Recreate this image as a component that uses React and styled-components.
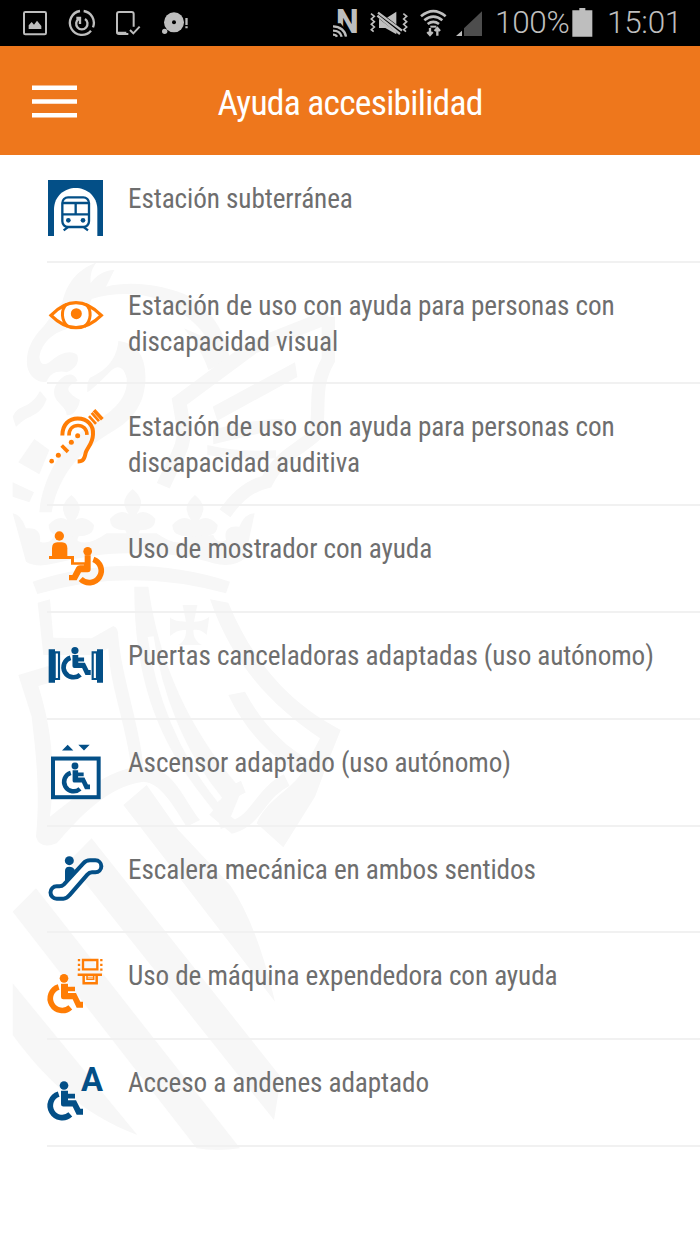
import React from "react";
import styled, { createGlobalStyle } from "styled-components";

const ORANGE = "#ff7d05";
const BLUE = "#034f87";

const GlobalStyle = createGlobalStyle`
  body {
    margin: 0;
    background: #ffffff;
    font-family: "Roboto Condensed", Roboto, sans-serif;
  }
`;

const Screen = styled.div`
  position: relative;
  isolation: isolate;
  width: 700px;
  height: 1244px;
  overflow: hidden;
`;

const StatusBar = styled.div`
  display: flex;
  align-items: center;
  box-sizing: border-box;
  height: 46px;
  padding: 0 0 0 23px;
  background: #000000;
  color: #bebebe;
`;

const StatusGroup = styled.div`
  display: flex;
  align-items: center;
  gap: ${props => props.gap}px;
  margin-left: ${props => props.start || 0}px;
`;

const StatusIcon = styled.svg`
  display: block;
  width: ${props => props.w}px;
  height: 46px;
`;

const StatusText = styled.span`
  font-family: Roboto, sans-serif;
  font-weight: 350;
  font-size: 31.5px;
  line-height: 48px;
  width: ${props => props.w}px;
  margin-left: ${props => props.start}px;
  letter-spacing: -0.3px;
  white-space: nowrap;
`;

const Header = styled.header`
  display: grid;
  grid-template-columns: 77px 1fr 77px;
  align-items: center;
  height: 109px;
  background: #ee771c;
`;

const MenuButton = styled.button`
  border: 0;
  padding: 1px 0 0 32px;
  background: none;
  height: 34px;
`;

const MenuIcon = styled.svg`
  display: block;
  width: 45px;
  height: 33px;
`;

const Title = styled.h1`
  margin: 0;
  padding-top: 5px;
  color: #ffffff;
  font-size: 35.5px;
  font-weight: 450;
  line-height: 42px;
  letter-spacing: -0.75px;
  text-align: center;
  font-stretch: 75%;
`;

const List = styled.ul`
  list-style: none;
  margin: 0;
  padding: 1px 0 0 47px;
`;

const Row = styled.li`
  display: flex;
  gap: 24px;
  box-sizing: border-box;
  height: ${props => (props.lines > 1 ? 121.5 : 106.9)}px;
  padding-top: 23px;
  border-bottom: 2px solid #f1f1f1;
`;

const RowIcon = styled.svg`
  flex: none;
  width: 57px;
  height: 57px;
  overflow: visible;
  color: ${props => props.tone};
`;

const RowText = styled.div`
  padding-top: 2px;
  color: #6e6e6e;
  font-size: 27.2px;
  line-height: 36px;
  letter-spacing: -0.09px;
  white-space: nowrap;
  font-stretch: 75%;
`;

const Line = styled.span`
  display: block;
`;

const Watermark = styled.svg`
  position: absolute;
  z-index: -1;
  left: 0;
  top: 255px;
  width: 370px;
  height: 900px;
`;

const Wheelchair = ({ x, y, scale = 1 }) => (
  <g transform={`translate(${x} ${y}) scale(${scale})`}>
    <circle cx="48" cy="13" r="13" fill="currentColor" />
    <path
      fill="currentColor"
      d="M39 29H60V38H81V52H60V57H84L97 83H105V101H86L74 76H46Q39 76 39 69Z"
    />
    <path fill="none" stroke="currentColor" strokeWidth="17" d="M32 39A36 36 0 1 0 67 100" />
  </g>
);

const icons = {
  station: {
    top: 42,
    art: (
      <>
        <path fill="currentColor" d="M144 45H309V213H144Z" />
        <path fill="#fff" d="M162 213V134C162 92 195 69 227 69S292 92 292 134V213Z" />
        <g fill="none" stroke="currentColor" strokeWidth="7">
          <rect x="187" y="97" width="80" height="89" rx="17" />
          <path d="M187 114H267M187 148H267M227 114V148" />
          <path d="M203 187L191 196M252 187L264 196" />
        </g>
        <circle cx="205" cy="166" r="7" fill="currentColor" />
        <circle cx="249" cy="166" r="7" fill="currentColor" />
      </>
    )
  },
  eye: {
    top: 363,
    art: (
      <>
        <path
          fill="#fff"
          stroke="currentColor"
          strokeWidth="10"
          d="M153 451Q190 413 228 413Q266 413 304 451Q266 488 228 488Q190 488 153 451Z"
        />
        <path
          fill="none"
          stroke="currentColor"
          strokeWidth="9"
          d="M200 417C182 435 183 466 204 485M257 417C276 435 275 466 253 485"
        />
        <circle cx="229" cy="446" r="16.5" fill="currentColor" />
      </>
    )
  },
  ear: {
    top: 52.5,
    art: (
      <>
        <g fill="none" stroke="currentColor">
          <path
            strokeWidth="12"
            d="M187 138C187 104 208 87 233 87C263 87 281 108 279 135C278 164 261 174 257 190C253 209 250 216 233 216"
          />
          <path strokeWidth="11" d="M207 138C207 118 219 108 234 108C249 108 260 118 261 136" />
          <path strokeWidth="11" d="M185 168L204 187" />
          <path strokeWidth="8" d="M267 80L288 103M275 70L297 95" />
          <path strokeWidth="11" d="M282 62L307 89" />
        </g>
        <g fill="currentColor">
          <circle cx="155" cy="215" r="7" />
          <circle cx="175" cy="197" r="7.5" />
          <circle cx="214" cy="158" r="7.5" />
          <circle cx="233" cy="139" r="7.5" />
        </g>
      </>
    )
  },
  counter: {
    top: 417,
    art: (
      <>
        <g fill="currentColor">
          <circle cx="178" cy="438" r="14" />
          <path d="M156 500V475Q156 457 172 457H186Q202 457 202 475V500Z" />
          <path d="M147 498H222V517H254V496H272V538Q272 547 263 547H243L230 571H207V555H217L229 532Q232 526 240 526H252V524H213V507H147Z" />
          <circle cx="263" cy="484" r="13" />
        </g>
        <path fill="none" stroke="currentColor" strokeWidth="17" d="M280 508A36 36 0 1 1 242 567" />
      </>
    )
  },
  gate: {
    top: 78,
    art: (
      <>
        <path fill="currentColor" d="M146 118H165V218H146ZM291 118H309V218H291Z" />
        <path
          fill="#fff"
          stroke="currentColor"
          strokeWidth="6.5"
          d="M164 127H177V207H164ZM278 127H291V207H278Z"
        />
        <Wheelchair x={185} y={111} scale={0.83} />
      </>
    )
  },
  lift: {
    top: 398.4,
    art: (
      <>
        <path fill="currentColor" d="M186 421L203 404L220 421ZM235 404H269L252 421Z" />
        <rect
          x="159"
          y="445"
          width="137"
          height="116"
          fill="#fff"
          stroke="currentColor"
          strokeWidth="12"
        />
        <Wheelchair x={187} y={457} scale={0.79} />
      </>
    )
  },
  escalator: {
    top: 59,
    art: (
      <>
        <circle cx="208" cy="91" r="13.5" fill="currentColor" />
        <path fill="currentColor" d="M195 160V122Q195 109 208 109Q219 109 224 118V132Z" />
        <path
          fill="#fff"
          stroke="currentColor"
          strokeWidth="12"
          d="M170 168H178Q186 168 192 162L250 99Q258 90 270 90H286A18 18 0 0 1 286 126H276Q268 126 262 133L208 195Q200 205 190 205H170A18 18 0 0 1 170 168Z"
        />
      </>
    )
  },
  machine: {
    top: 379,
    art: (
      <>
        <g fill="none" stroke="currentColor">
          <path strokeWidth="7" d="M249 391H292V419H249Z" />
          <path strokeWidth="7" strokeDasharray="7 7.3" d="M237 388V423M304 388V423" />
          <path strokeWidth="7.5" d="M233 435H306M251 438V461H290V438" />
          <path strokeWidth="4.5" d="M261 438V449H281V438" />
          <path strokeWidth="4" opacity="0.55" d="M262 443H280" />
        </g>
        <Wheelchair x={144} y={433} />
      </>
    )
  },
  platform: {
    top: 699.6,
    art: (
      <>
        <text
          x="276"
          y="783"
          fill="currentColor"
          fontFamily="Roboto, sans-serif"
          fontWeight="700"
          fontSize="102"
          textLength="66"
          lengthAdjust="spacingAndGlyphs"
          textAnchor="middle"
        >
          A
        </text>
        <Wheelchair x={144} y={754} />
      </>
    )
  }
};

const rows = [
  { icon: "station", tone: BLUE, lines: ["Estación subterránea"] },
  {
    icon: "eye",
    tone: ORANGE,
    lines: ["Estación de uso con ayuda para personas con", "discapacidad visual"]
  },
  {
    icon: "ear",
    tone: ORANGE,
    lines: ["Estación de uso con ayuda para personas con", "discapacidad auditiva"]
  },
  { icon: "counter", tone: ORANGE, lines: ["Uso de mostrador con ayuda"] },
  { icon: "gate", tone: BLUE, lines: ["Puertas canceladoras adaptadas (uso autónomo)"] },
  { icon: "lift", tone: BLUE, lines: ["Ascensor adaptado (uso autónomo)"] },
  { icon: "escalator", tone: BLUE, lines: ["Escalera mecánica en ambos sentidos"] },
  { icon: "machine", tone: ORANGE, lines: ["Uso de máquina expendedora con ayuda"] },
  { icon: "platform", tone: BLUE, lines: ["Acceso a andenes adaptado"] }
];

const FLEUR =
  "M0 0Q-28 25 -25 45Q-22 60 -12 75Q-40 58 -68 90Q-68 118 -40 122L-22 124Q-16 132 -20 142H20Q16 132 22 124L40 122Q68 118 68 90Q40 58 12 75Q22 60 25 45Q28 25 0 0Z";

// Coat of arms behind the list: crest, crown, cloak, striped shield
const CoatOfArms = () => (
  <Watermark viewBox="0 0 1110 2700" fill="#f7f7f7" stroke="none">
    <g>
      <path d="M290 22C235 45 205 75 187 140L130 215C85 260 78 300 82 335C88 365 115 385 140 380C150 350 180 345 200 352C230 340 238 320 232 300C215 285 185 290 150 320C135 332 120 330 118 305C125 265 155 235 200 222C245 205 262 165 275 132C350 108 450 112 510 150C570 190 600 215 620 250L552 220C590 270 610 300 625 345L690 315C680 240 640 170 570 125C500 92 400 75 318 95L343 45C310 45 285 65 272 85C270 60 275 40 290 22Z" />
      <path d="M355 258C415 265 440 310 436 380C430 460 390 500 320 540C240 590 175 660 155 772H118C125 680 180 570 270 510C340 470 385 430 380 370C370 330 350 330 330 350C310 370 280 400 262 412Q260 380 270 368C310 350 350 320 355 258Z" />
      <path d="M38 485C60 440 85 470 120 408L140 432C120 490 85 475 48 516ZM165 395C190 350 225 350 232 378C195 395 195 410 240 435C235 465 215 485 200 480C200 450 150 440 165 395Z" />
      <path d="M103 552L148 585L118 658L55 622ZM38 682L102 712L88 742L38 725Z" />
      <path
        fill="none"
        stroke="#f7f7f7"
        strokeWidth="42"
        d="M985 185L760 275L538 440L550 510C560 570 525 610 490 692"
      />
      <path
        fill="none"
        stroke="#f7f7f7"
        strokeWidth="40"
        d="M985 185L985 315C935 400 965 470 945 540C890 590 840 600 800 680C750 690 710 725 675 775"
      />
      <path d="M638 455L885 322L892 366L652 497ZM638 525C700 505 790 492 852 492L850 520C780 535 720 548 640 568ZM622 570C690 585 750 590 828 586V610C750 615 690 612 622 600Z" />
    </g>
    <g transform="translate(0 405)">
      <path d={FLEUR} transform="translate(214 315)" />
      <path d={FLEUR} transform="translate(398 297)" />
      <path d={FLEUR} transform="translate(585 315)" />
      <path d="M38 370Q62 372 78 415Q125 410 120 455Q150 465 165 435L220 440Q250 480 320 430H470Q540 480 570 440L640 435Q650 465 678 450Q668 405 718 410Q735 370 764 370L735 505Q700 535 640 520C560 495 500 490 390 490C300 490 230 505 165 520Q110 535 78 515Z" />
      <path d="M98 575Q390 480 690 575L678 610Q390 530 112 612Z" />
    </g>
    <g transform="translate(0 915)">
      <path d="M113 128L150 118L160 233L275 235L340 198Q355 202 355 230C365 350 420 500 430 620L395 630C375 480 330 380 325 265L290 285H130ZM55 345L145 318L160 365L115 378C160 520 165 640 150 770C250 690 340 620 430 620C520 620 545 710 600 780L560 800C510 720 480 670 430 665C320 680 240 770 170 850Q120 870 108 830C120 700 110 600 95 470Z" />
      <path d="M403 80L445 80C470 260 540 480 725 690L680 800C560 650 400 480 403 80Z" />
      <path
        fill="none"
        stroke="#ffffff"
        strokeWidth="18"
        d="M452 230C475 400 545 580 660 720"
      />
      <path d="M548 135H592L582 185C600 185 615 180 628 170L620 225C605 210 590 208 580 210C580 235 590 245 605 255H535C550 245 558 235 558 210C540 208 525 215 510 228V172C520 182 535 185 558 185Z" />
      <path d="M630 118L685 128C760 310 870 430 1022 510L990 590L945 710L850 862L770 790C800 720 860 700 905 640L960 535C820 440 700 320 630 118ZM685 405L735 395C780 480 850 560 930 600L900 640C810 590 735 510 685 405Z" />
      <path
        fill="none"
        stroke="#f7f7f7"
        strokeWidth="38"
        d="M640 750L700 800C770 780 780 700 860 660M730 680C680 700 660 750 680 800"
      />
    </g>
    <g transform="translate(0 1725)">
      <path d="M440 -135L535 0L690 165Q770 280 825 515L370 -75Z" />
      <path d="M275 25L843 742L822 870L205 95Z" />
      <path d="M108 175L720 955Q650 965 590 955L38 245Z" />
      <path d="M38 460L412 915C240 850 130 740 38 615Z" />
    </g>
  </Watermark>
);

const App = () => (
  <Screen>
    <GlobalStyle />
    <CoatOfArms />
    <StatusBar>
      <StatusGroup gap={20}>
        <StatusIcon w={24} viewBox="69 0 72 138">
          <rect x="72" y="36" width="66" height="67" rx="4" fill="none" stroke="#bebebe" strokeWidth="6" />
          <path fill="#bebebe" d="M86 87V76L95 66L102 74L111 62L124 78V87Z" />
        </StatusIcon>
        <StatusIcon w={29} viewBox="201 0 87 138" fill="none" stroke="#bebebe">
          <path strokeWidth="7" d="M240 33A36 36 0 1 0 273 92M251 33A36 36 0 0 1 279 82" />
          <path strokeWidth="7" d="M236 57A17 17 0 1 0 255 57M229 54H240V72" />
        </StatusIcon>
        <StatusIcon w={25} viewBox="347 0 75 138" fill="none" stroke="#bebebe">
          <path strokeWidth="6" d="M400 80V42Q400 36 394 36H356Q350 36 350 42V97Q350 102 356 102H384" />
          <path strokeWidth="6" d="M352 98H378M389 90L399 100L418 80" />
        </StatusIcon>
        <StatusIcon w={28} viewBox="483 0 84 138">
          <circle cx="522" cy="67" r="30" fill="#bebebe" />
          <circle cx="522" cy="67" r="6" fill="#000" />
          <circle cx="494" cy="94" r="8" fill="#bebebe" />
          <path fill="#bebebe" d="M556 54H563V75H556ZM556 79H563V85H556Z" />
        </StatusIcon>
      </StatusGroup>
      <StatusGroup gap={9} start={143}>
        <StatusIcon w={28} viewBox="36 0 84 138">
          <text
            x="48"
            y="98"
            fill="#bebebe"
            fontFamily="Roboto, sans-serif"
            fontWeight="800"
            fontSize="98"
            textLength="68"
            lengthAdjust="spacingAndGlyphs"
          >
            N
          </text>
          <path fill="#000" d="M36 70H62L84 98V112H36Z" />
          <g fill="none" stroke="#bebebe" strokeWidth="7">
            <path d="M39 79C60 79 75 92 78 110M39 92C52 92 62 98 65 110M39 104Q48 104 51 110" />
          </g>
        </StatusIcon>
        <StatusIcon w={41} viewBox="147 0 123 138">
          <path fill="#bebebe" d="M177 56H196L229 35V103L196 84H177Z" />
          <path stroke="#000" strokeWidth="18" d="M168 38L246 98" />
          <path stroke="#bebebe" strokeWidth="7" d="M174 38L246 92M172 47L240 102" />
          <path
            fill="none"
            stroke="#bebebe"
            strokeWidth="5"
            d="M153 41L163 49L154 57L163 65L154 73L163 81L154 89L161 95M250 41L260 49L251 57L260 65L251 73L260 81L251 89L258 95"
          />
        </StatusIcon>
        <StatusIcon w={28} viewBox="297 0 84 138" fill="none" stroke="#bebebe">
          <path strokeWidth="8" d="M303 49Q340 18 377 49M313 61Q340 39 367 61M323 72Q340 59 357 72" />
          <path strokeWidth="6" d="M331 80H349" />
          <path strokeWidth="7" d="M330 84V104M322 96L330 105L338 96M352 107V85M344 93L352 84L360 93" />
        </StatusIcon>
        <StatusIcon w={28} viewBox="408 0 84 138">
          <path fill="#4d4d4d" d="M432 108V85L486 34V108Z" />
          <path fill="#bebebe" d="M408 108L426 92V108Z" />
        </StatusIcon>
      </StatusGroup>
      <StatusText w={77} start={11}>100%</StatusText>
      <StatusIcon w={21} viewBox="761 0 63 138">
        <path fill="#bebebe" d="M762 31H783V24H801V31H822V110H762Z" />
      </StatusIcon>
      <StatusText w={80} start={14}>15:01</StatusText>
    </StatusBar>
    <Header>
      <MenuButton aria-label="Menú">
        <MenuIcon viewBox="0 0 45 33" stroke="#fff" strokeWidth="4.4">
          <path d="M0 2.8H45M0 16.5H45M0 30.2H45" />
        </MenuIcon>
      </MenuButton>
      <Title>Ayuda accesibilidad</Title>
    </Header>
    <List>
      {rows.map(({ icon, tone, lines }) => (
        <Row key={icon} lines={lines.length}>
          <RowIcon tone={tone} viewBox={`141 ${icons[icon].top} 171 171`}>
            {icons[icon].art}
          </RowIcon>
          <RowText>
            {lines.map(line => <Line key={line}>{line}</Line>)}
          </RowText>
        </Row>
      ))}
    </List>
  </Screen>
);

export default App;
